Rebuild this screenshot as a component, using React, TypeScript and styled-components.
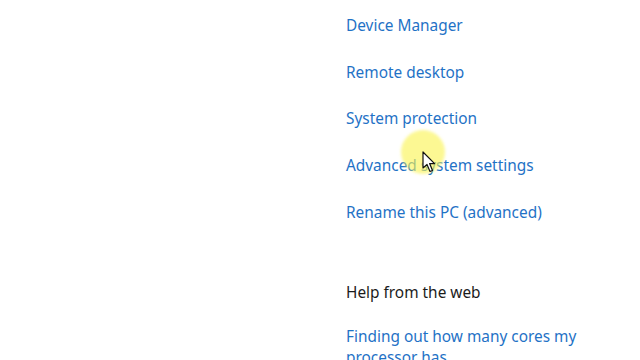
import React from "react";
import styled, { createGlobalStyle } from "styled-components";

const Global = createGlobalStyle`
  html, body {
    margin: 0;
    padding: 0;
    background: #ffffff;
  }
  body {
    font-family: "Noto Sans", "Open Sans", sans-serif;
  }
`;

const Page = styled.div`
  width: 640px;
  height: 360px;
  overflow: hidden;
  position: relative;
  background: #ffffff;
`;

const Column = styled.div`
  display: flex;
  flex-direction: column;
  padding: 15px 0 0 346px;
`;

const LinkItem = styled.a`
  display: block;
  color: #1f72c6;
  font-size: 15.4px;
  line-height: 21px;
  height: 21px;
  margin-bottom: 25.7px;
  text-decoration: none;
  cursor: pointer;
  white-space: nowrap;
`;

const Heading = styled.div`
  color: #1b1b1b;
  font-size: 15.4px;
  line-height: 21px;
  margin-top: 34px;
  margin-bottom: 23px;
`;

const WrapLink = styled.a`
  display: block;
  width: 250px;
  color: #1f72c6;
  font-size: 15.4px;
  line-height: 21px;
  text-decoration: none;
`;

const Highlight = styled.div`
  position: absolute;
  left: 401px;
  top: 130px;
  width: 44px;
  height: 44px;
  border-radius: 50%;
  background: rgba(250, 244, 80, 0.62);
  filter: blur(1.5px);
  pointer-events: none;
`;

const Cursor = styled.svg`
  position: absolute;
  left: 422px;
  top: 151px;
  width: 14px;
  height: 22px;
  pointer-events: none;
`;

const links = [
  "Device Manager",
  "Remote desktop",
  "System protection",
  "Advanced system settings",
  "Rename this PC (advanced)",
];

export default function App() {
  return (
    <Page>
      <Global />
      <Column>
        {links.map((l) => (
          <LinkItem key={l}>{l}</LinkItem>
        ))}
        <Heading>Help from the web</Heading>
        <WrapLink>Finding out how many cores my processor has</WrapLink>
      </Column>
      <Highlight />
      <Cursor viewBox="0 0 14 22">
        <path
          d="M1 1 L1 17 L5 13.5 L8 20.5 L10.5 19.5 L7.6 12.6 L12.6 12.6 Z"
          fill="#ffffff"
          stroke="#111111"
          strokeWidth="1.2"
          strokeLinejoin="round"
        />
      </Cursor>
    </Page>
  );
}
